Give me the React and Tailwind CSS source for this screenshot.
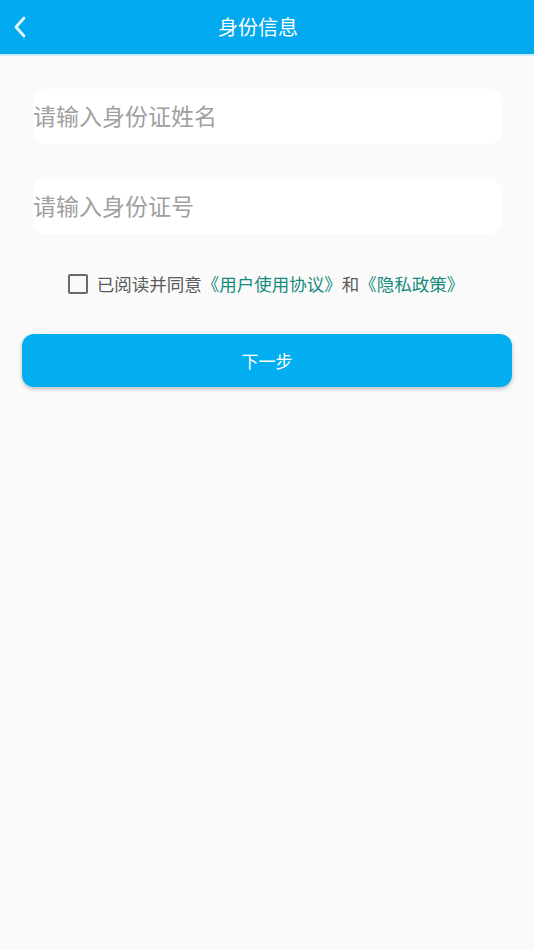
export default function App() {
  const font = { fontFamily: '"Noto Sans CJK SC", "Noto Sans", sans-serif' };
  return (
    <div className="min-h-[950px] w-[534px] bg-[#fafafa]" style={font}>
      <div className="relative flex h-[56px] items-center justify-center bg-[#02a9ef] border-b-2 border-[#c9ecfb] pr-[18px]">
        <svg className="absolute left-[12px] top-[15px]" width="16" height="24" viewBox="0 0 16 24" fill="none">
          <path d="M12 3 L4 12 L12 21" stroke="#e6f6fe" strokeWidth="2.8" strokeLinecap="round" strokeLinejoin="round" />
        </svg>
        <span className="text-[20px] text-white leading-none">身份信息</span>
      </div>
      <div className="flex flex-col px-[33px] pt-[33px] gap-[35px]">
        <div className="flex h-[55px] items-center rounded-[12px] bg-white pb-[3px]">
          <span className="text-[23px] text-[#a0a0a0] leading-none">请输入身份证姓名</span>
        </div>
        <div className="flex h-[55px] items-center rounded-[12px] bg-white pb-[3px]">
          <span className="text-[23px] text-[#a0a0a0] leading-none">请输入身份证号</span>
        </div>
      </div>
      <div className="mt-[40px] flex items-center justify-center pr-[2px]">
        <div className="h-[20px] w-[20px] rounded-[2px] border-2 border-[#6b6b6b]" />
        <span className="ml-[9px] text-[17.5px] text-[#5a5a5a] leading-none">
          已阅读并同意<span className="text-[#168b7c]">《用户使用协议》</span>和<span className="text-[#168b7c]">《隐私政策》</span>
        </span>
      </div>
      <div className="mt-[40px] px-[22px]">
        <div className="flex h-[53px] items-center justify-center rounded-[12px] bg-[#02aeef] shadow-[0_2px_4px_rgba(0,0,0,0.25)]">
          <span className="text-[17px] text-white leading-none">下一步</span>
        </div>
      </div>
    </div>
  );
}
